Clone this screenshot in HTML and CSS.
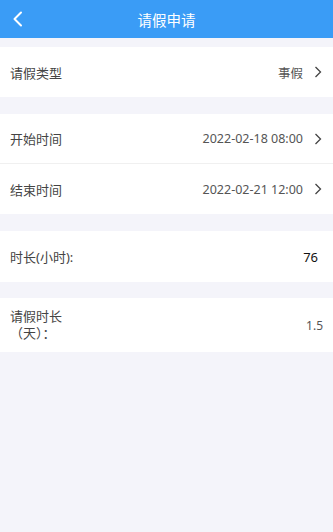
FILE: index.html
```html
<!DOCTYPE html>
<html lang="zh">
<head>
<meta charset="utf-8">
<link rel="stylesheet" href="styles.css">
</head>
<body>
<div class="header">
  <span class="back">
    <svg width="12" height="16" viewBox="0 0 12 16"><path d="M9 1.5 L2.5 8 L9 14.5" fill="none" stroke="#fff" stroke-width="2" stroke-linecap="round" stroke-linejoin="round"/></svg>
  </span>
  <span class="title">请假申请</span>
</div>
<div class="group">
  <div class="row">
    <span class="label">请假类型</span>
    <span class="value">事假</span>
    <svg class="chev" width="8" height="12" viewBox="0 0 8 12"><path d="M1.5 1 L6.5 6 L1.5 11" fill="none" stroke="#444" stroke-width="1.3"/></svg>
  </div>
</div>
<div class="group">
  <div class="row sep">
    <span class="label">开始时间</span>
    <span class="value">2022-02-18 08:00</span>
    <svg class="chev" width="8" height="12" viewBox="0 0 8 12"><path d="M1.5 1 L6.5 6 L1.5 11" fill="none" stroke="#444" stroke-width="1.3"/></svg>
  </div>
  <div class="row">
    <span class="label">结束时间</span>
    <span class="value">2022-02-21 12:00</span>
    <svg class="chev" width="8" height="12" viewBox="0 0 8 12"><path d="M1.5 1 L6.5 6 L1.5 11" fill="none" stroke="#444" stroke-width="1.3"/></svg>
  </div>
</div>
<div class="group">
  <div class="row tall">
    <span class="label">时长(小时):</span>
    <span class="value dark">76</span>
  </div>
</div>
<div class="group">
  <div class="row taller">
    <span class="label narrow">请假时长（天）：</span>
    <span class="value small">1.5</span>
  </div>
</div>
</body>
</html>
```
FILE: styles.css
```css
html, body {
  margin: 0;
  padding: 0;
  background: #f4f4fa;
  font-family: "Noto Sans", "Noto Sans CJK SC", sans-serif;
}
body {
  width: 333px;
  min-height: 532px;
}
.header {
  height: 38px;
  background: #3a9cf6;
  display: flex;
  align-items: center;
  justify-content: center;
  position: relative;
}
.back {
  position: absolute;
  left: 12px;
  top: 11px;
  display: flex;
}
.title {
  color: #fff;
  font-size: 14.5px;
  font-weight: 400;
}
.group {
  background: #fff;
  margin-top: 17px;
}
.header + .group {
  margin-top: 9px;
}
.group:last-child {
  margin-top: 16px;
}
.row {
  height: 50px;
  display: flex;
  align-items: center;
  padding: 0 11px 0 10px;
  box-sizing: border-box;
}
.row.sep {
  border-bottom: 1px solid #f0f0f0;
}
.row.tall {
  height: 51px;
}
.row.taller {
  height: 54px;
}
.label {
  flex: 1;
  font-size: 13px;
  color: #444;
}
.label.narrow {
  flex: none;
  width: 56px;
  line-height: 17px;
  margin-top: -1px;
}
.value {
  font-size: 12.5px;
  color: #555;
  margin-right: 11px;
}
.value.dark {
  color: #111;
  font-size: 13px;
  margin-right: 4px;
}
.value.small {
  margin-left: auto;
  margin-right: -1px;
  font-size: 12px;
}
.chev {
  display: block;
}
```
